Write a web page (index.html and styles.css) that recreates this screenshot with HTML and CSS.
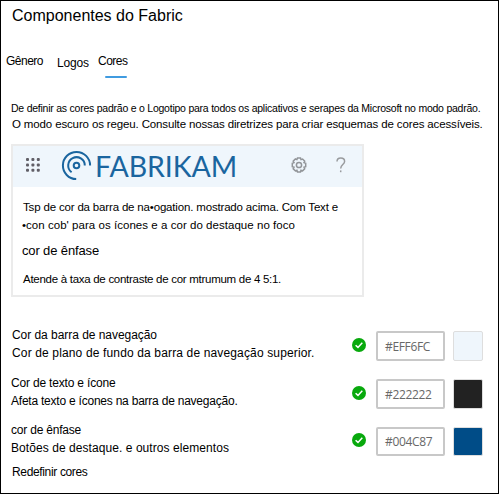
FILE: index.html
```html
<!DOCTYPE html>
<html lang="pt">
<head>
<meta charset="utf-8">
<title>Componentes do Fabric</title>
<link rel="stylesheet" href="styles.css">
</head>
<body>
<main class="panel">
  <h1 class="title">Componentes do Fabric</h1>
  <nav class="tabs">
    <span class="tab tab-general">Gênero</span>
    <span class="tab tab-logos">Logos</span>
    <span class="tab tab-colors">Cores</span>
  </nav>
  <p class="intro intro-first">De definir as cores padrão e o Logotipo para todos os aplicativos e serapes da Microsoft no modo padrão.</p>
  <p class="intro intro-second">O modo escuro os regeu. Consulte nossas diretrizes para criar esquemas de cores acessíveis.</p>

  <section class="card">
    <header class="navbar">
      <svg class="waffle" width="14" height="14" viewBox="0 0 14 14" fill="#605e66">
        <rect x="0" y="0" width="3" height="3" rx="1"/><rect x="5.4" y="0" width="3" height="3" rx="1"/><rect x="10.8" y="0" width="3" height="3" rx="1"/>
        <rect x="0" y="5.4" width="3" height="3" rx="1"/><rect x="5.4" y="5.4" width="3" height="3" rx="1"/><rect x="10.8" y="5.4" width="3" height="3" rx="1"/>
        <rect x="0" y="10.8" width="3" height="3" rx="1"/><rect x="5.4" y="10.8" width="3" height="3" rx="1"/><rect x="10.8" y="10.8" width="3" height="3" rx="1"/>
      </svg>
      <svg class="mark" width="32" height="32" viewBox="0 0 32 32" fill="none" stroke="#1a659f" stroke-width="2">
        <circle cx="15.5" cy="15.5" r="2.8"/>
        <path d="M10.6 22.2A8.3 8.3 0 1 1 23.8 15.5"/>
        <path d="M15.2 29.1A13.6 13.6 0 1 1 29.1 15.5"/>
      </svg>
      <span class="brand">FABRIKAM</span>
      <svg class="gear" width="16" height="16" viewBox="0 0 16 16" fill="none" stroke="#929599" stroke-width="1.5">
        <path d="M6.5 1h3l.5 1.6 1.6-.6 2.1 2.1-.7 1.5 1.7.6v3.4l-1.7.6.7 1.6-2.1 2.1-1.6-.7-.5 1.7h-3l-.6-1.7-1.5.7-2.2-2.1.8-1.6-1.7-.6V6.2L3 5.6l-.8-1.5L4.4 2l1.5.6z"/>
        <circle cx="8" cy="8" r="2.6"/>
      </svg>
      <svg class="help" width="10" height="16" viewBox="0 0 10 16" fill="none" stroke="#999b9e" stroke-width="1.5">
        <path d="M1 4.6C1 2.3 2.6 1 4.8 1s3.8 1.3 3.8 3.4c0 3.2-3.9 3.2-3.9 7"/><path d="M4.7 13.4v1.8"/>
      </svg>
    </header>
    <div class="card-body">
      <p class="copy copy-nav">Tsp de cor da barra de na•ogation. mostrado acima. Com Text e</p>
      <p class="copy copy-icon">•con cob' para os ícones e a cor do destaque no foco</p>
      <p class="copy copy-accent">cor de ênfase</p>
      <p class="copy copy-contrast">Atende à taxa de contraste de cor mtrumum de 4 5:1.</p>
    </div>
  </section>

  <section class="settings">
    <div class="setting">
      <div class="labels"><p class="name-nav">Cor da barra de navegação</p><p class="desc-nav">Cor de plano de fundo da barra de navegação superior.</p></div>
      <svg class="check" width="14" height="14" viewBox="0 0 14 14"><circle cx="7" cy="7" r="7" fill="#08a90d"/><path d="M3.6 7.2 6 9.4l4.3-4.6" fill="none" stroke="#fff" stroke-width="1.5"/></svg>
      <span class="field">#EFF6FC</span>
      <span class="swatch swatch-nav"></span>
    </div>
    <div class="setting">
      <div class="labels"><p class="name-text">Cor de texto e ícone</p><p class="desc-text">Afeta texto e ícones na barra de navegação.</p></div>
      <svg class="check" width="14" height="14" viewBox="0 0 14 14"><circle cx="7" cy="7" r="7" fill="#08a90d"/><path d="M3.6 7.2 6 9.4l4.3-4.6" fill="none" stroke="#fff" stroke-width="1.5"/></svg>
      <span class="field">#222222</span>
      <span class="swatch swatch-text"></span>
    </div>
    <div class="setting">
      <div class="labels"><p class="name-accent">cor de ênfase</p><p class="desc-accent">Botões de destaque. e outros elementos</p></div>
      <svg class="check" width="14" height="14" viewBox="0 0 14 14"><circle cx="7" cy="7" r="7" fill="#08a90d"/><path d="M3.6 7.2 6 9.4l4.3-4.6" fill="none" stroke="#fff" stroke-width="1.5"/></svg>
      <span class="field field-short">#004C87</span>
      <span class="swatch swatch-accent"></span>
    </div>
  </section>
  <p class="reset">Redefinir cores</p>
</main>
</body>
</html>
```
FILE: styles.css
```css
* { box-sizing: border-box; }
body { margin: 0; background: #fff; color: #000; font: 12px/18px "Liberation Sans", Arial, sans-serif; }
h1, p { margin: 0; font-weight: normal; white-space: nowrap; }
svg { flex: none; display: block; }

.panel { width: 499px; height: 494px; border: 1px solid #000; padding: 5px 5px 0; overflow: hidden; }
.title { margin-left: 6px; font-size: 16px; line-height: 20px; }

.tabs { display: flex; align-items: flex-start; height: 26px; margin-top: 27px; line-height: 16px; }
.tab { white-space: nowrap; }
.tab-general { width: 51px; letter-spacing: -0.5px; }
.tab-logos { width: 41px; padding-top: 2px; letter-spacing: -0.15px; }
.tab-colors { letter-spacing: -0.5px; }
.tab-colors::after { content: ""; display: block; width: 22px; height: 2px; margin: 7px 0 0 7px; background: #409be0; border-radius: 1px; }

.intro { margin-left: 5px; line-height: 16px; }
.intro-first { margin-top: 21px; font-size: 10.5px; letter-spacing: -0.235px; }
.intro-second { margin-left: 6px; font-size: 11.5px; letter-spacing: -0.138px; }

.card { width: 353px; height: 153px; margin: 12px 0 0 5px; border: 2px solid #ebebeb; }
.navbar { display: flex; align-items: center; height: 41px; background: #eff6fc; }
.waffle { margin: 0 0 4px 13px; }
.mark { margin: 0 0 1px 21px; }
.brand { width: 198px; margin-bottom: 2px; padding-left: 2px; color: #1a659f; font: 28.5px/36px Lato, sans-serif; letter-spacing: -0.05px; }
.gear { margin-bottom: 4px; }
.help { margin: 0 0 4px 29px; }
.card-body { padding: 11px 0 0 9px; }
.copy-nav { padding-left: 1px; font-size: 11.5px; letter-spacing: -0.17px; }
.copy-icon { font-size: 11.5px; letter-spacing: 0.04px; }
.copy-accent { margin-top: 8px; font-size: 13px; letter-spacing: -0.137px; }
.copy-contrast { margin: 10px 0 0 1px; font-size: 11.5px; letter-spacing: -0.28px; }

.settings { display: grid; grid-template-rows: 48px 47px 48px; margin: 29px 0 0 5px; }
.setting { display: flex; align-items: flex-start; }
.labels { width: 341px; }
.name-nav { padding-left: 1px; letter-spacing: -0.044px; }
.desc-nav { padding-left: 1px; letter-spacing: 0.144px; }
.name-text { letter-spacing: -0.179px; }
.desc-text { letter-spacing: -0.225px; }
.name-accent { letter-spacing: -0.209px; }
.desc-accent { letter-spacing: 0.066px; }
.check { margin-top: 12px; }
.field { width: 69px; height: 30px; margin: 5px 8px 0 10px; padding-left: 7px; border: 2px solid #c8c8c8; border-radius: 2px; color: #686868; font: 12px/27px "Open Sans", sans-serif; letter-spacing: -0.35px; }
.field-short { height: 29px; margin-top: 6px; line-height: 26px; }
.swatch { width: 30px; height: 30px; margin-top: 5px; border: 1px solid #dedede; border-radius: 2px; }
.swatch-nav { background: #eff6fc; }
.swatch-text { background: #222; }
.swatch-accent { height: 29px; margin-top: 6px; background: #004c87; }
.reset { margin-left: 6px; margin-top: -6px; letter-spacing: -0.347px; }
```
